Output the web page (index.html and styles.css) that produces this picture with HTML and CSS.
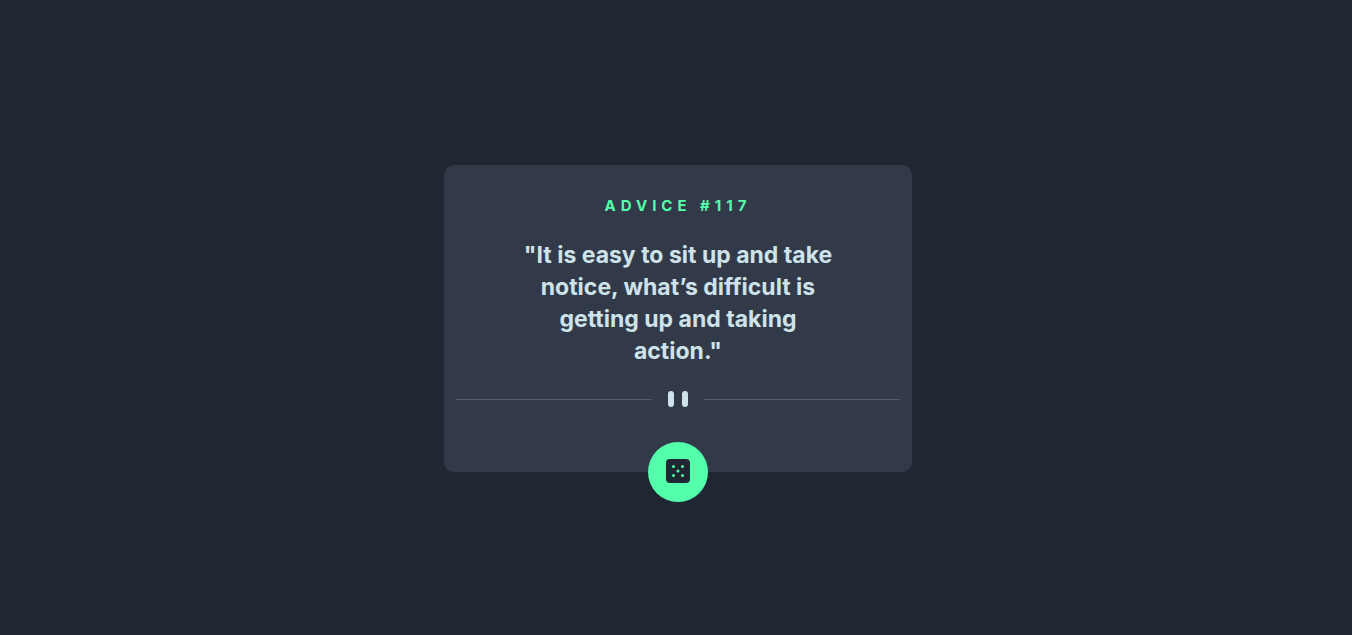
FILE: index.html
```html
<!DOCTYPE html>
<html lang="en">
<head>
<meta charset="utf-8">
<meta name="viewport" content="width=device-width, initial-scale=1">
<title>Advice generator</title>
<link rel="stylesheet" href="styles.css">
</head>
<body>
<main class="card">
  <h1 class="card-title">Advice #117</h1>
  <p class="card-quote">"It is easy to sit up and take<br>notice, what’s difficult is<br>getting up and taking<br>action."</p>
  <div class="divider" aria-hidden="true">
    <svg width="20" height="16" viewBox="0 0 20 16" fill="#CEE3E9"><rect width="6" height="16" rx="3"/><rect x="14" width="6" height="16" rx="3"/></svg>
  </div>
  <button class="dice" type="button" aria-label="New advice">
    <svg width="24" height="24" viewBox="0 0 24 24" aria-hidden="true"><path fill="#202733" d="M20 0H4a4.005 4.005 0 0 0-4 4v16a4.005 4.005 0 0 0 4 4h16a4.005 4.005 0 0 0 4-4V4a4.005 4.005 0 0 0-4-4ZM7.500 18a1.500 1.500 0 1 1 0-3 1.500 1.500 0 0 1 0 3Zm0-9a1.500 1.500 0 1 1 0-3 1.500 1.500 0 0 1 0 3Zm4.500 4.500a1.500 1.500 0 1 1 0-3 1.500 1.500 0 0 1 0 3Zm4.500 4.500a1.500 1.500 0 1 1 0-3 1.500 1.500 0 0 1 0 3Zm0-9a1.500 1.500 0 1 1 0-3 1.500 1.500 0 0 1 0 3Z"/></svg>
  </button>
</main>
</body>
</html>
```
FILE: styles.css
```css
* {
  box-sizing: border-box;
}

body {
  margin: 0;
  min-height: 100vh;
  padding: 2px 0 0 4px;
  display: grid;
  place-items: center;
  background: #202733;
  font-family: Inter, "Open Sans", sans-serif;
}

.card {
  width: calc(100% - 32px);
  max-width: 468px;
  padding: 32px 12px 0;
  display: flex;
  flex-direction: column;
  align-items: center;
  border-radius: 10px;
  background: #323a49;
  text-align: center;
}

.card-title {
  margin: 0 0 24px;
  font-size: 15px;
  line-height: 18px;
  font-weight: 700;
  letter-spacing: 5px;
  text-transform: uppercase;
  color: #53ffaa;
}

.card-quote {
  margin: 0 0 24px;
  font-size: 23px;
  line-height: 32px;
  font-weight: 700;
  color: #cee3e9;
}

.divider {
  width: 100%;
  display: flex;
  align-items: center;
  gap: 16px;
}

.divider::before,
.divider::after {
  content: "";
  flex: 1;
  height: 1px;
  background: #4f5d74;
}

.dice {
  width: 60px;
  height: 60px;
  margin: 35px 0 -30px;
  padding: 0 0 2px;
  display: grid;
  place-items: center;
  border: 0;
  border-radius: 50%;
  background: #53ffaa;
  cursor: pointer;
}
```
